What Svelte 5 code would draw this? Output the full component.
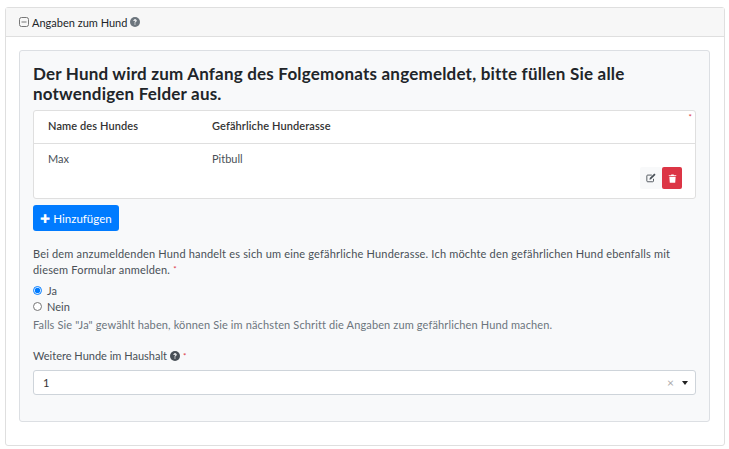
<script>
    let rows = [{ name: "Max", breed: "Pitbull" }];
    let gefaehrlich = $state("ja");
</script>

{#snippet help()}
    <svg class="help" viewBox="0 0 16 16" width="10" height="10">
        <circle cx="8" cy="8" r="8" fill="currentColor" />
        <path d="M5.4 6.2C5.5 4.6 6.6 3.7 8.1 3.7c1.500 0 2.600.9 2.600 2.200 0 1.100-.6 1.600-1.300 2.100-.6.4-.8.7-.8 1.300H7.100c0-1 .3-1.500 1-2 .5-.4.8-.6.8-1.100 0-.5-.4-.8-.9-.8-.6 0-1 .4-1 .9z" fill="#fff" />
        <rect x="7.100" y="10.300" width="1.700" height="1.800" fill="#fff" />
    </svg>
{/snippet}

<div class="card">
    <div class="card-header">
        <svg class="collapse" viewBox="0 0 10 10" width="10" height="10">
            <rect x=".5" y=".5" width="9" height="9" rx="2" fill="none" stroke="#777" />
            <path d="M2.500 5h5" stroke="#777" />
        </svg>
        <span class="title">Angaben zum Hund</span>
        <span class="title-help">{@render help()}</span>
    </div>
    <div class="card-body">
        <div class="well">
            <h2>Der Hund wird zum Anfang des Folgemonats angemeldet, bitte füllen Sie alle notwendigen Felder aus.</h2>

            <div class="table-box">
                <span class="table-req">*</span>
                <div class="tr head">
                    <div class="col-name">Name des Hundes</div>
                    <div>Gefährliche Hunderasse</div>
                </div>
                {#each rows as row}
                    <div class="tr body-row">
                        <div class="col-name">{row.name}</div>
                        <div>{row.breed}</div>
                    </div>
                    <div class="actions">
                        <button class="btn-edit" aria-label="Bearbeiten">
                            <svg viewBox="0 0 12 12" width="10" height="10">
                                <path d="M9 7v2.500a1 1 0 0 1-1 1H2a1 1 0 0 1-1-1v-6a1 1 0 0 1 1-1h5" fill="none" stroke="#495057" stroke-width="1.100" />
                                <path d="M4.500 6l5.500-5.500 1.500 1.500L6 7.500 4.200 8z" fill="#495057" />
                            </svg>
                        </button>
                        <button class="btn-delete" aria-label="Löschen">
                            <svg viewBox="0 0 12 12" width="9" height="9">
                                <path d="M4.500.5h3l.5 1h3v1.200H1V1.500h3zM1.800 3.500h8.400l-.6 8H2.400z" fill="#fff" />
                            </svg>
                        </button>
                    </div>
                {/each}
            </div>

            <button class="btn-add"><span class="plus">✚</span> Hinzufügen</button>

            <p class="question">Bei dem anzumeldenden Hund handelt es sich um eine gefährliche Hunderasse. Ich möchte den gefährlichen Hund ebenfalls mit diesem Formular anmelden. <span class="req">*</span></p>

            <label class="radio"><input type="radio" bind:group={gefaehrlich} value="ja" /> Ja</label>
            <label class="radio"><input type="radio" bind:group={gefaehrlich} value="nein" /> Nein</label>

            <p class="hint">Falls Sie "Ja" gewählt haben, können Sie im nächsten Schritt die Angaben zum gefährlichen Hund machen.</p>

            <div class="select-label"><span>Weitere Hunde im Haushalt</span> {@render help()} <span class="req">*</span></div>
            <div class="select">
                <span class="value">1</span>
                <span class="clear">×</span>
                <span class="caret"></span>
            </div>
        </div>
    </div>
</div>

<style>
    :global(body) {
        background: #fff;
        font-family: "Lato", "Liberation Sans", sans-serif;
        font-size: 11px;
        color: #495057;
    }

    .card {
        margin: 7px 4px 0 5px;
        height: 439px;
        box-sizing: border-box;
        border: 1px solid #dfdfdf;
        border-radius: 3px;
    }

    .card-header {
        height: 29px;
        box-sizing: border-box;
        background: #f7f7f7;
        border-bottom: 1px solid #dfdfdf;
        padding-left: 13px;
        display: flex;
        align-items: center;
        color: #212529;
    }

    .collapse {
        margin-right: 3px;
    }

    .title-help {
        color: #6c757d;
        margin-left: 3px;
        display: flex;
    }

    .card-body {
        padding: 13px 14px 0 13px;
    }

    .well {
        height: 372px;
        box-sizing: border-box;
        background: #f8f9fa;
        border: 1px solid #dcdfe3;
        border-radius: 3px;
        padding: 13px 13px 0;
    }

    h2 {
        margin: 0;
        font-size: 17px;
        line-height: 20px;
        font-weight: 700;
        letter-spacing: 0.2px;
        color: #212529;
    }

    .table-box {
        position: relative;
        margin-top: 6px;
        height: 89px;
        box-sizing: border-box;
        background: #fff;
        border: 1px solid #dfdfdf;
        border-radius: 3px;
    }

    .table-req {
        position: absolute;
        top: 1px;
        right: 3px;
        color: #dc3545;
        font-size: 8px;
    }

    .tr {
        display: flex;
        padding-left: 14px;
    }

    .col-name {
        width: 164px;
    }

    .head {
        height: 33px;
        box-sizing: border-box;
        border-bottom: 1px solid #dfdfdf;
        align-items: center;
        color: #333;
        font-weight: 600;
        letter-spacing: 0.1px;
        padding-bottom: 3px;
    }

    .body-row {
        padding-top: 8px;
    }

    .actions {
        position: absolute;
        right: 13px;
        top: 56px;
        display: flex;
    }

    .actions button {
        height: 22px;
        border: none;
        padding: 0;
        border-radius: 2px;
        display: flex;
        align-items: center;
        justify-content: center;
    }

    .btn-edit {
        width: 22px;
        background: #f8f9fa;
    }

    .btn-delete {
        width: 20px;
        background: #dc3545;
    }

    .btn-add {
        margin-top: 6px;
        display: block;
        width: 86px;
        height: 26px;
        padding: 0;
        background: #007bff;
        border: none;
        border-radius: 3px;
        color: #fff;
        font: inherit;
        font-size: 11.500px;
    }

    .plus {
        font-size: 12px;
    }

    .question {
        margin: 15px 0 0;
        line-height: 16px;
        letter-spacing: 0.18px;
    }

    .req {
        color: #dc3545;
        font-size: 8px;
        line-height: 8px;
        vertical-align: 2px;
    }

    .radio {
        display: flex;
        align-items: center;
        height: 16px;
        gap: 5px;
    }

    .radio:first-of-type {
        margin-top: 4px;
    }

    .radio input {
        margin: 0;
        width: 9px;
        height: 9px;
        accent-color: #007bff;
    }

    .hint {
        margin: 3px 0 0;
        line-height: 16px;
        color: #6c757d;
        letter-spacing: 0.13px;
    }

    .select-label {
        margin-top: 15px;
        line-height: 16px;
        display: flex;
        align-items: center;
        gap: 3px;
    }

    .select {
        margin-top: 6px;
        height: 25px;
        box-sizing: border-box;
        background: #fff;
        border: 1px solid #ced4da;
        border-radius: 3px;
        display: flex;
        align-items: center;
        padding: 0 7px 0 9px;
        color: #333;
    }

    .value {
        flex: 1;
    }

    .clear {
        color: #aaa;
        font-size: 12px;
        margin-right: 8px;
    }

    .caret {
        border: 3.500px solid transparent;
        border-top: 4px solid #222;
        border-bottom: none;
    }
</style>
